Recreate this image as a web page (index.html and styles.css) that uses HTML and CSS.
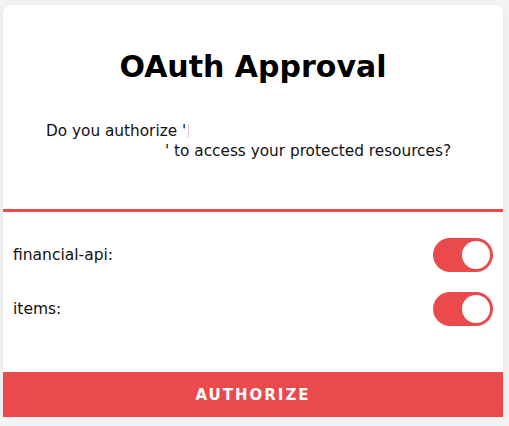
FILE: index.html
```html
<!DOCTYPE html>
<html lang="en">
<head>
<meta charset="utf-8">
<title>OAuth Approval</title>
<link rel="stylesheet" href="styles.css">
</head>
<body>
<div class="card">
  <h1 class="title">OAuth Approval</h1>
  <p class="prompt">Do you authorize '<span class="client"></span><br><span class="client-gap"></span>' to access your protected resources?</p>
  <div class="scopes">
    <div class="scope">
      <span class="scope-name">financial-api:</span>
      <span class="toggle"><span class="knob"></span></span>
    </div>
    <div class="scope">
      <span class="scope-name">items:</span>
      <span class="toggle"><span class="knob"></span></span>
    </div>
  </div>
  <button class="authorize" type="button">AUTHORIZE</button>
</div>
</body>
</html>
```

FILE: styles.css
```css
html, body {
  margin: 0;
  padding: 0;
  background: #f4f4f4;
}
body {
  padding: 5px 6px 0 3px;
  font-family: "DejaVu Sans", sans-serif;
  color: #111;
}
.card {
  width: 500px;
  background: #fff;
  border-radius: 8px 8px 0 0;
  box-shadow: 0 2px 10px rgba(0,0,0,0.07);
  display: flex;
  flex-direction: column;
}
.title {
  margin: 0;
  padding: 42px 0 0;
  height: 50px;
  font-size: 30px;
  line-height: 40px;
  font-weight: bold;
  text-align: center;
  color: #000;
}
.prompt {
  margin: 0;
  padding: 24px 14px 0 43px;
  height: 88px;
  font-size: 15.3px;
  line-height: 20px;
  color: #111;
}
.client {
  display: inline-block;
  width: 1px;
  height: 14px;
  background: #f7c8c8;
  vertical-align: -2px;
  margin-left: 2px;
}
.client-gap {
  display: inline-block;
  width: 119px;
}
.scopes {
  border-top: 3px solid #ea4a4b;
  padding: 26px 10px 46px 10px;
  display: flex;
  flex-direction: column;
  gap: 20px;
}
.scope {
  display: flex;
  align-items: center;
  justify-content: space-between;
  height: 34px;
}
.scope-name {
  font-size: 15.5px;
  color: #111;
}
.toggle {
  width: 60px;
  height: 34px;
  border-radius: 17px;
  background: #ea4a4b;
  display: flex;
  align-items: center;
  justify-content: flex-end;
  padding: 0 3px;
  box-sizing: border-box;
}
.knob {
  width: 28px;
  height: 28px;
  border-radius: 50%;
  background: #fff;
}
.authorize {
  border: 0;
  margin: 0;
  height: 45px;
  background: #ea4a4b;
  color: #fff;
  font-family: "DejaVu Sans", sans-serif;
  font-weight: bold;
  font-size: 15px;
  letter-spacing: 2px;
  cursor: pointer;
}
```
